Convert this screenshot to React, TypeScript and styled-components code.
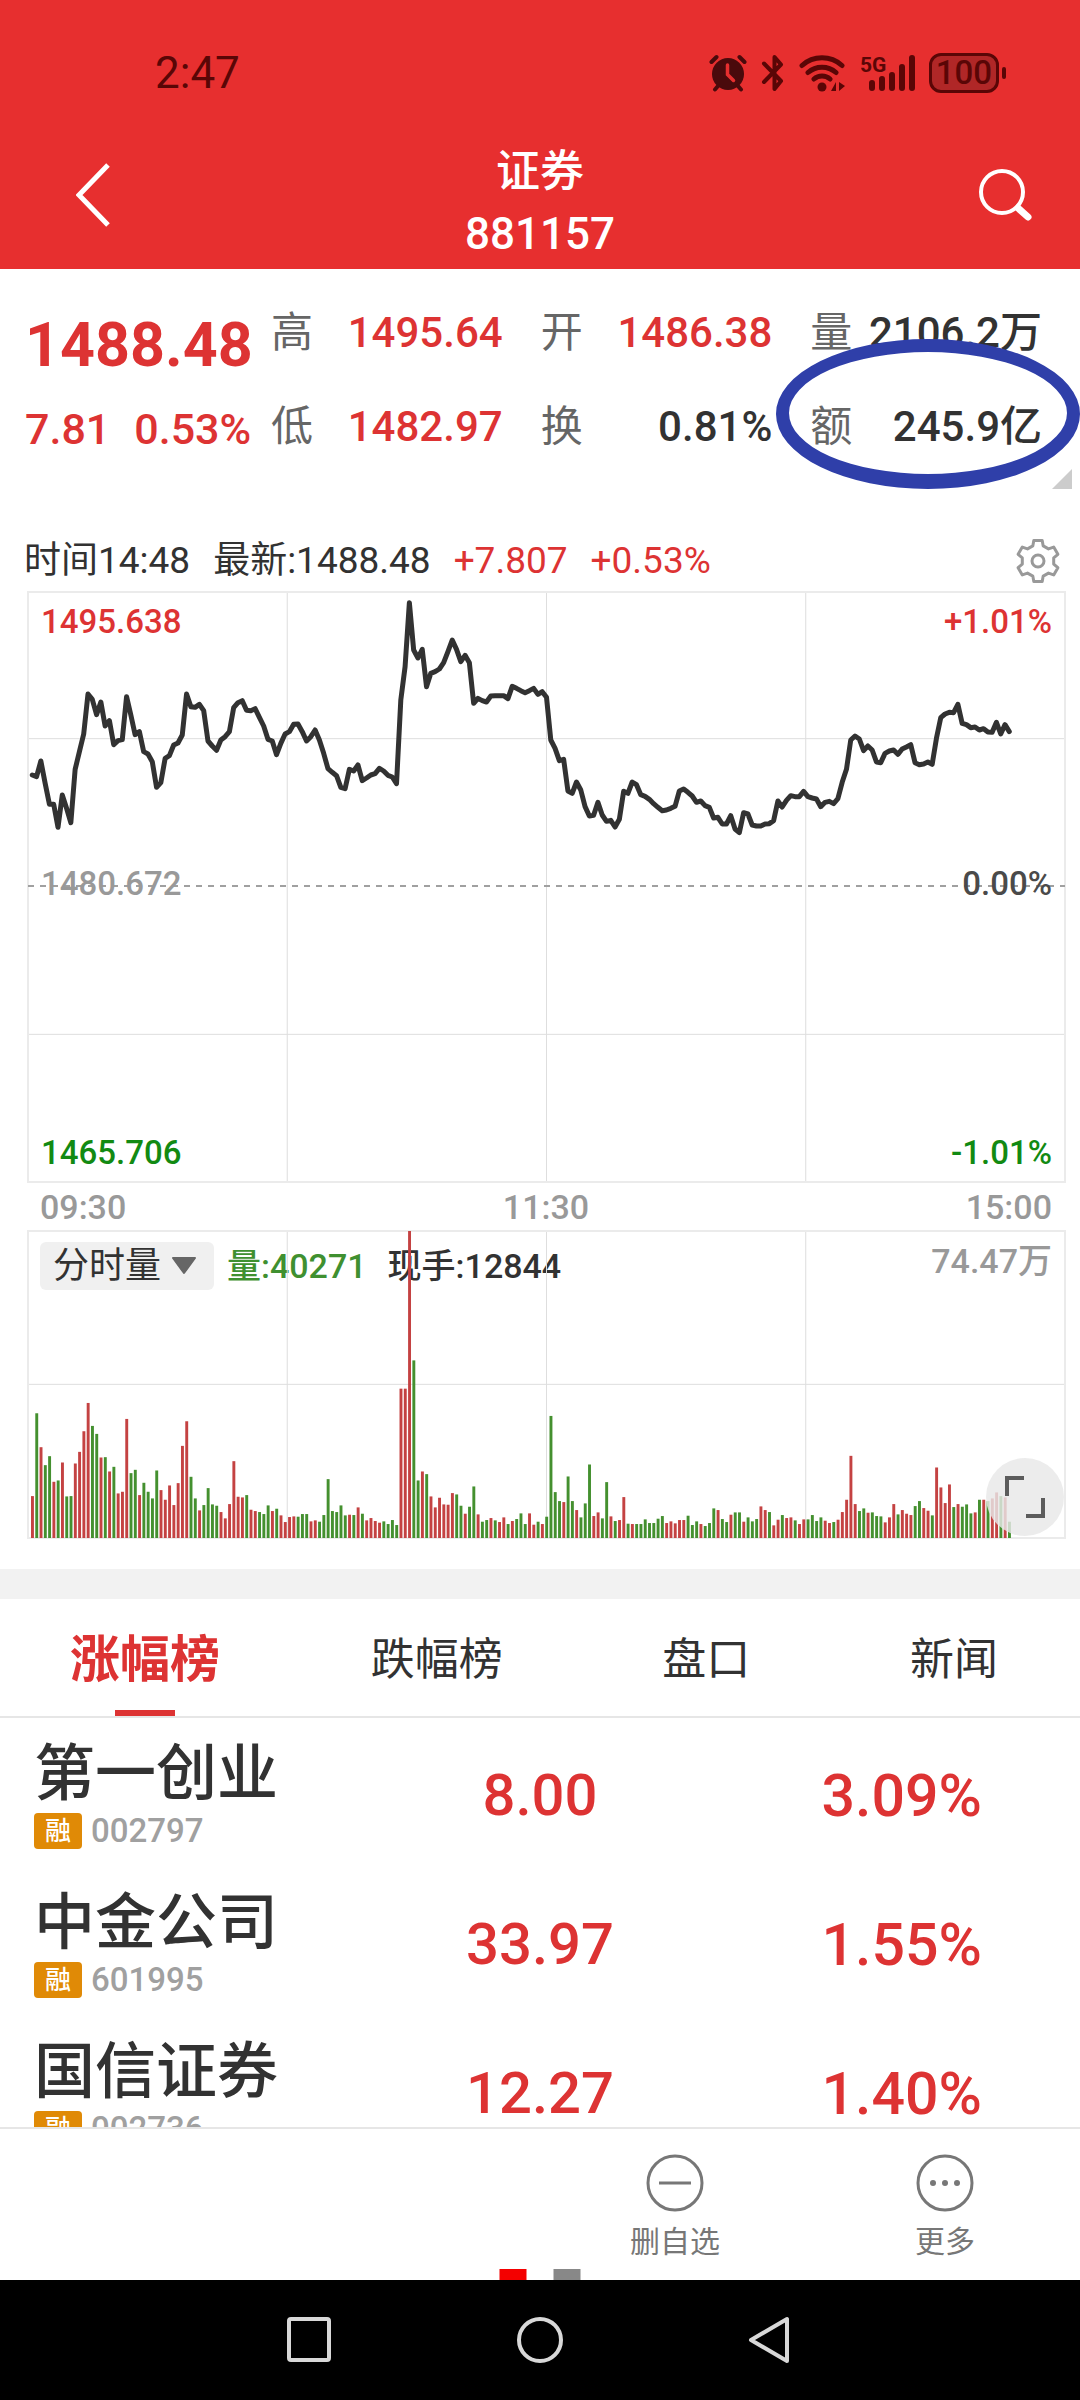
import React from "react";
import styled, { createGlobalStyle } from "styled-components";

const RED = "#dd3333";
const INK = "#323232";
const GRID = "#e6e6e6";

const GlobalStyle = createGlobalStyle`
  * { box-sizing: border-box; }
  body {
    margin: 0;
    background: #fff;
    color: ${INK};
    font-family: Roboto, "Noto Sans CJK SC", sans-serif;
  }
  button, select { font: inherit; color: inherit; border: 0; padding: 0; background: none; }
  svg { display: block; flex: none; }
`;

const Page = styled.main`
  display: flex;
  flex-direction: column;
  height: 100vh;
  overflow: hidden;
`;

/* ---------- header ---------- */

const Header = styled.header`
  flex: none;
  background: #e72f2f;
  color: #fff;
`;

const StatusBar = styled.div`
  display: flex;
  justify-content: space-between;
  align-items: center;
  height: 140px;
  padding: 6px 74px 0 155px;
  color: #5a0606;
`;

const Clock = styled.time`
  font-size: 44px;
  line-height: 52px;
`;

const StatusIcons = styled.div`
  display: flex;
  align-items: center;
  gap: 14px;
`;

const Battery = styled.div`
  display: flex;
  align-items: center;
  gap: 3px;
  &::after {
    content: "";
    width: 4px;
    height: 12px;
    border-radius: 2px;
    background: #5a0606;
  }
`;

const BatteryLevel = styled.span`
  width: 70px;
  height: 40px;
  border: 3px solid #5a0606;
  border-radius: 12px;
  background: #b02727;
  font-size: 33px;
  font-weight: 500;
  line-height: 34px;
  text-align: center;
`;

const TitleBar = styled.div`
  display: grid;
  grid-template-columns: 186px 1fr 186px;
  align-items: center;
  height: 129px;
  padding-bottom: 3px;
`;

const HeaderButton = styled.button<{ $end?: boolean }>`
  display: flex;
  justify-content: ${(p) => (p.$end ? "flex-end" : "center")};
  padding: 0 ${(p) => (p.$end ? 46 : 0)}px 16px 0;
`;

const Title = styled.h1`
  margin: 0;
  font-size: 44px;
  font-weight: 500;
  line-height: 62px;
  text-align: center;
`;

const Code = styled.span`
  display: block;
`;

/* ---------- quote ---------- */

const Quote = styled.section`
  position: relative;
  flex: none;
  display: grid;
  grid-template-columns: 246px 1fr;
  height: 256px;
  padding: 16px 38px 0 25px;
`;

const Last = styled.div`
  display: flex;
  flex-direction: column;
  gap: 18px;
  padding-top: 24px;
  color: ${RED};
`;

const LastPrice = styled.strong`
  font-size: 61px;
  font-weight: 700;
  line-height: 72px;
`;

const Change = styled.div`
  display: flex;
  gap: 24px;
  font-size: 43px;
  font-weight: 500;
  line-height: 60px;
`;

const Facts = styled.dl`
  display: grid;
  grid-template-columns: repeat(3, 1fr);
  grid-template-rows: repeat(2, 94px);
  column-gap: 38px;
  margin: 0;
  padding-top: 1px;
`;

const Fact = styled.div`
  display: flex;
  justify-content: space-between;
  align-items: center;
  font-size: 42px;
  line-height: 60px;
  white-space: nowrap;
`;

const FactLabel = styled.dt`
  color: #666;
`;

const FactValue = styled.dd<{ $up?: boolean }>`
  margin: 0;
  font-weight: 500;
  color: ${(p) => (p.$up ? RED : INK)};
`;

const Ring = styled.svg`
  position: absolute;
  top: 70px;
  right: 0;
`;

const Corner = styled.svg`
  position: absolute;
  right: 8px;
  bottom: 36px;
`;

/* ---------- charts ---------- */

const InfoLine = styled.div`
  flex: none;
  display: flex;
  align-items: center;
  gap: 23px;
  height: 67px;
  padding: 4px 17px 0 24px;
  font-size: 37px;
  line-height: 48px;
`;

const InfoText = styled.span<{ $up?: boolean }>`
  color: ${(p) => (p.$up ? RED : INK)};
`;

const SettingsButton = styled.button`
  margin-left: auto;
`;

const Plot = styled.section<{ $h: number }>`
  flex: none;
  display: grid;
  height: ${(p) => p.$h}px;
  margin: 0 15px 0 28px;
  > * { grid-area: 1 / 1; min-width: 0; min-height: 0; }
`;

const PlotSvg = styled.svg`
  width: 100%;
  height: 100%;
  overflow: visible;
`;

const Scale = styled.div`
  display: flex;
  flex-direction: column;
  justify-content: space-between;
  padding: 10px 13px 9px;
  font-size: 33px;
  font-weight: 500;
  line-height: 40px;
`;

const ScaleRow = styled.div<{ $tone: string; $right?: string; $lift?: boolean }>`
  display: flex;
  justify-content: space-between;
  padding-bottom: ${(p) => (p.$lift ? 8 : 0)}px;
  color: ${(p) => p.$tone};
  > :last-child { color: ${(p) => p.$right ?? p.$tone}; }
`;

const TimeAxis = styled.div`
  flex: none;
  display: flex;
  justify-content: space-between;
  align-items: center;
  height: 49px;
  padding: 0 28px 0 40px;
  color: #999;
  font-size: 34px;
  font-weight: 500;
`;

const VolumeHead = styled.div`
  display: flex;
  align-items: flex-start;
  padding: 11px 13px 0 12px;
  font-size: 36px;
  line-height: 48px;
`;

const PickerBox = styled.label`
  display: grid;
  align-items: center;
  width: 174px;
  height: 48px;
  border-radius: 6px;
  background: #f0f0f0;
  > * { grid-area: 1 / 1; }
  > svg { justify-self: end; margin-right: 17px; pointer-events: none; }
`;

const Picker = styled.select`
  appearance: none;
  width: 100%;
  height: 48px;
  padding-left: 13px;
  line-height: 48px;
`;

const VolumeText = styled.span<{ $tone: string; $gap: number }>`
  margin-left: ${(p) => p.$gap}px;
  color: ${(p) => p.$tone};
  font-size: 34px;
  font-weight: 500;
`;

const VolumeMax = styled.span`
  margin-left: auto;
  color: #999;
  font-size: 34px;
  font-weight: 500;
  line-height: 38px;
`;

const ExpandButton = styled.button`
  align-self: end;
  justify-self: end;
  display: grid;
  place-items: center;
  width: 78px;
  height: 78px;
  margin: 0 1px 2px 0;
  border-radius: 50%;
  background: rgba(232, 232, 232, 0.82);
`;

const Gap = styled.div`
  flex: none;
  height: 30px;
  margin-top: 31px;
  background: #f2f2f2;
`;

/* ---------- ranking ---------- */

const Tabs = styled.nav`
  flex: none;
  display: flex;
  justify-content: space-between;
  height: 119px;
  padding: 0 82px 0 79px;
  border-bottom: 2px solid ${GRID};
`;

/* Every tab keeps the width of its 44px label; the active label grows over it. */
const Tab = styled.button<{ $active?: boolean; $chars: number }>`
  display: grid;
  grid-template-columns: 100%;
  align-items: center;
  justify-items: center;
  width: ${(p) => p.$chars * 44}px;
  white-space: nowrap;
  color: ${(p) => (p.$active ? RED : INK)};
  font-size: ${(p) => (p.$active ? 50 : 44)}px;
  font-weight: ${(p) => (p.$active ? 700 : 400)};
  &::after {
    content: "";
    grid-area: 1 / 1;
    align-self: end;
    width: 60px;
    height: 6px;
    background: ${(p) => (p.$active ? RED : "transparent")};
  }
`;

const TabText = styled.span`
  grid-area: 1 / 1;
  padding-top: 4px;
  line-height: 60px;
`;

const ListArea = styled.div`
  flex: 1;
  min-height: 0;
  overflow: hidden;
`;

const Stocks = styled.table`
  width: 100%;
  table-layout: fixed;
  border-collapse: collapse;
`;

const StockRow = styled.tr`
  height: 149px;
`;

const NameCell = styled.th`
  padding: 17px 0 0 34px;
  text-align: left;
  font-weight: 400;
  vertical-align: top;
`;

const Name = styled.div`
  font-size: 61px;
  font-weight: 500;
  line-height: 78px;
`;

const Meta = styled.div`
  display: flex;
  align-items: center;
  gap: 9px;
  color: #a0a0a0;
  font-size: 33px;
  font-weight: 500;
  line-height: 36px;
`;

const Badge = styled.span`
  width: 48px;
  height: 36px;
  border-radius: 4px;
  background: #e08a06;
  color: #fff;
  font-size: 26px;
  line-height: 36px;
  text-align: center;
`;

const NumberCell = styled.td<{ $right?: boolean }>`
  padding: ${(p) => (p.$right ? "5px 98px 0 0" : "5px 0 0")};
  text-align: ${(p) => (p.$right ? "right" : "center")};
  color: ${RED};
  font-size: ${(p) => (p.$right ? 59 : 58)}px;
  font-weight: 500;
  white-space: nowrap;
`;

/* ---------- bottom ---------- */

const Actions = styled.footer`
  position: relative;
  flex: none;
  display: grid;
  grid-template-columns: repeat(4, 1fr);
  height: 153px;
  border-top: 2px solid ${GRID};
`;

const Action = styled.button<{ $column: number }>`
  grid-column: ${(p) => p.$column};
  display: flex;
  flex-direction: column;
  align-items: center;
  gap: 8px;
  padding-top: 25px;
  color: #777;
  font-size: 30px;
  line-height: 44px;
`;

const Pager = styled.div`
  position: absolute;
  bottom: 0;
  left: 50%;
  display: flex;
  gap: 27px;
  transform: translateX(-50%);
`;

const PagerDot = styled.span<{ $on?: boolean }>`
  width: 27px;
  height: 11px;
  background: ${(p) => (p.$on ? "#f40000" : "#888")};
`;

const SystemNav = styled.nav`
  flex: none;
  display: flex;
  justify-content: center;
  align-items: center;
  gap: 182px;
  height: 120px;
  background: #000;
`;

/* ---------- data ---------- */

/* One sample per minute, measured downwards; the price plot spans 36 to 1806. */
const PRICE = [
  585, 590, 543, 610, 673, 673, 742, 645, 685, 728, 568, 515, 462, 342, 358, 404, 366, 438, 422, 494,
  482, 479, 350, 405, 464, 455, 515, 522, 545, 622, 608, 535, 527, 495, 489, 465, 342, 380, 382, 373,
  392, 483, 498, 511, 480, 470, 455, 383, 368, 362, 391, 392, 386, 412, 438, 478, 483, 524, 490, 462,
  455, 433, 432, 455, 483, 470, 450, 480, 520, 566, 577, 587, 622, 626, 568, 573, 555, 602, 594, 585,
  581, 565, 573, 586, 591, 611, 360, 260, 68, 210, 234, 208, 320, 280, 275, 267, 248, 215, 180, 208,
  245, 226, 248, 370, 355, 362, 366, 348, 347, 347, 347, 356, 319, 325, 332, 338, 332, 325, 343, 335,
  352, 480, 505, 542, 538, 633, 640, 606, 630, 680, 708, 706, 667, 705, 724, 721, 741, 718, 634, 640,
  606, 614, 644, 649, 658, 671, 682, 692, 690, 685, 679, 633, 627, 637, 648, 667, 663, 677, 682, 714,
  712, 732, 732, 707, 747, 758, 698, 702, 735, 738, 738, 732, 731, 722, 663, 681, 661, 647, 650, 650,
  634, 650, 654, 657, 680, 667, 664, 671, 656, 607, 568, 480, 468, 477, 512, 498, 510, 546, 548, 520,
  513, 510, 523, 507, 501, 494, 548, 554, 552, 546, 553, 475, 413, 402, 397, 398, 373, 430, 434, 443,
  441, 450, 446, 456, 457, 427, 462, 434, 455,
];

/* Bar top (plot spans 241 to 1164) followed by r for a rising and g for a falling minute. */
const VOLUME = `
1038r 789g 891r 945g 918g 995r 991g 937r 1039g 1038g 940r 905r 843r 758r 827g 851g 922r 921g 964r 950g
1030r 1025r 806r 969g 959g 1035r 998g 1025g 1045g 961g 1020r 1049r 1006r 1065r 999r 887r 813r 980g 1045g 1081r
1065g 1014g 1063g 1067g 1086r 1105r 1062r 933r 1040r 1042r 1035g 1079r 1083r 1086g 1092g 1066g 1083r 1076g 1096r 1116r
1101r 1099r 1100g 1092g 1092g 1114r 1111r 1115g 1095g 987g 1083g 1086g 1066g 1096g 1094r 1095g 1072r 1091g 1111r 1104r
1113r 1118r 1114g 1122g 1110g 1125g 715r 715r 241r 630g 991g 964r 972g 1039r 1072r 1043r 1063r 1064r 1029r 1033g
1067g 1091r 1070g 1009g 1093r 1115g 1110g 1104r 1111g 1116r 1102r 1122g 1113r 1107g 1090g 1122g 1090r 1124r 1115g 1122r
1100g 797g 1026g 1053g 1056r 979g 1053g 1080r 1102g 1060g 943g 1098r 1087r 1105g 996g 1099r 1113g 1110r 1041r 1121g
1122r 1122g 1122g 1108g 1119g 1119g 1106g 1098g 1119r 1114r 1120r 1110r 1110r 1097g 1125g 1114g 1122r 1128g 1119g 1075g
1080r 1107g 1116g 1094r 1087g 1087g 1115r 1102g 1114g 1107g 1069r 1080r 1086g 1126r 1109r 1095g 1104r 1102r 1111g 1122r
1108r 1108g 1095g 1113g 1102g 1112r 1119r 1116g 1109r 1086r 1049r 917r 1062r 1083g 1075g 1088r 1087g 1098g 1099g 1117r
1102r 1062r 1093g 1080r 1091r 1095r 1068g 1053g 1074r 1082r 1096g 952r 1012r 1059r 1003r 1071g 1062r 1070g 1063g 1090g
1087r 1049g 1049r 1053g 1045r 1027r 1038g 1042r 1115g`
  .trim()
  .split(/\s+/)
  .map((item) => ({ top: parseInt(item, 10), up: item.endsWith("r") }));

const FACTS = [
  { label: "高", value: "1495.64", up: true },
  { label: "开", value: "1486.38", up: true },
  { label: "量", value: "2106.2万" },
  { label: "低", value: "1482.97", up: true },
  { label: "换", value: "0.81%" },
  { label: "额", value: "245.9亿" },
];

const TABS = ["涨幅榜", "跌幅榜", "盘口", "新闻"];

const STOCKS = [
  { name: "第一创业", code: "002797", price: "8.00", change: "3.09%" },
  { name: "中金公司", code: "601995", price: "33.97", change: "1.55%" },
  { name: "国信证券", code: "002736", price: "12.27", change: "1.40%" },
];

/* ---------- drawings ---------- */

const AlarmIcon = () => (
  <svg width="38" height="38" viewBox="0 0 38 38" fill="none" stroke="#4a0a0c" strokeWidth="4" strokeLinecap="round">
    <circle cx="19" cy="20" r="16" fill="#4a0a0c" stroke="none" />
    <path d="M2.500 8 7.500 3M35.500 8 30.500 3M9 32 6 35.500M29 32l3 3.500" />
    <path d="M18.500 11v9.500l6 6" stroke="#e72f2f" strokeWidth="3.500" />
  </svg>
);

const BluetoothIcon = () => (
  <svg width="24" height="38" viewBox="0 0 24 38" fill="none" stroke="#5a0606" strokeWidth="4" strokeLinejoin="round" strokeLinecap="round">
    <path d="M3 9.500 20 27l-6.500 8V3L20 10.500 3 28" />
  </svg>
);

const WifiIcon = () => (
  <svg width="48" height="38" viewBox="0 0 48 38" fill="none" stroke="#5a0606" strokeWidth="5" strokeLinecap="round">
    <path d="M3 11.500a30 30 0 0 1 40 0M9 18.500a21 21 0 0 1 28 0M15 25a12 12 0 0 1 16 0" />
    <circle cx="23" cy="33" r="4.500" fill="#5a0606" stroke="none" />
    <path d="M37 28v9h-5zM40 37v-9l6 4z" fill="#5a0606" stroke="none" />
  </svg>
);

const SignalIcon = () => (
  <svg width="54" height="38" viewBox="0 0 54 38" fill="none" stroke="#5a0606" strokeWidth="6" strokeLinecap="round">
    <text x="-1" y="18" fill="#5a0606" stroke="none" fontSize="21" fontWeight="700">5G</text>
    <path d="M11 29v5M21 25v9M31 21v13M41 13v21M51 4v30" />
  </svg>
);

const gearPath = (() => {
  const points: string[] = [];
  for (let k = 0; k < 6; k++) {
    const base = (k * Math.PI) / 3 - Math.PI / 2;
    [[-0.33, 16], [-0.2, 21], [0.2, 21], [0.33, 16]].forEach(([turn, r]) => {
      points.push(`${(25 + r * Math.cos(base + turn)).toFixed(1)} ${(25 + r * Math.sin(base + turn)).toFixed(1)}`);
    });
  }
  return `M${points.join("L")}Z`;
})();

const GearIcon = () => (
  <svg width="50" height="50" viewBox="0 0 50 50" fill="none" stroke="#999" strokeWidth="3" strokeLinejoin="round">
    <path d={gearPath} />
    <circle cx="25" cy="25" r="6" />
  </svg>
);

const GridLines = ({ top, bottom, rows }: { top: number; bottom: number; rows: number[] }) => (
  <g fill="none">
    <path
      stroke="#dedede"
      strokeWidth="1"
      vectorEffect="non-scaling-stroke"
      d={
        [60.5, 121, 181.5].map((x) => `M${x} ${top}V${bottom}`).join("") +
        rows.map((y) => `M0 ${y}H242`).join("")
      }
    />
    <path stroke="#ebebeb" strokeWidth="2" vectorEffect="non-scaling-stroke" d={`M0 ${top}H242V${bottom}H0Z`} />
  </g>
);

const PricePlot = () => (
  <PlotSvg viewBox="0 36 242 1770" preserveAspectRatio="none" role="img" aria-label="分时走势">
    <GridLines top={36} bottom={1806} rows={[476, 1363]} />
    <path d="M0 918H242" stroke="#a0a0a0" strokeWidth="2" strokeDasharray="6 6" vectorEffect="non-scaling-stroke" />
    <polyline
      points={PRICE.map((y, i) => `${i + 1},${y}`).join(" ")}
      fill="none"
      stroke={INK}
      strokeWidth="5"
      strokeLinejoin="round"
      strokeLinecap="round"
      vectorEffect="non-scaling-stroke"
    />
  </PlotSvg>
);

const VolumePlot = () => (
  <PlotSvg viewBox="0 241 242 923" preserveAspectRatio="none" role="img" aria-label="分时量">
    <GridLines top={241} bottom={1164} rows={[702]} />
    {VOLUME.map((bar, i) => (
      <rect key={i} x={i + 0.7} y={bar.top} width="0.68" height={1164 - bar.top} fill={bar.up ? "#c44242" : "#44902f"} />
    ))}
  </PlotSvg>
);

export default function App() {
  return (
    <Page>
      <GlobalStyle />
      <Header>
        <StatusBar>
          <Clock>2:47</Clock>
          <StatusIcons>
            <AlarmIcon />
            <BluetoothIcon />
            <WifiIcon />
            <SignalIcon />
            <Battery>
              <BatteryLevel>100</BatteryLevel>
            </Battery>
          </StatusIcons>
        </StatusBar>
        <TitleBar>
          <HeaderButton aria-label="返回">
            <svg width="34" height="64" viewBox="0 0 34 64" fill="none" stroke="#fff" strokeWidth="5">
              <path d="M32 2 3 32l29 30" />
            </svg>
          </HeaderButton>
          <Title>
            证券<Code>881157</Code>
          </Title>
          <HeaderButton $end aria-label="搜索">
            <svg width="56" height="56" viewBox="0 0 56 56" fill="none" stroke="#fff" strokeLinecap="round">
              <circle cx="24" cy="25" r="21" strokeWidth="4" />
              <path d="m40 41 10 9" strokeWidth="7" />
            </svg>
          </HeaderButton>
        </TitleBar>
      </Header>

      <Quote>
        <Last>
          <LastPrice>1488.48</LastPrice>
          <Change>
            <span>7.81</span>
            <span>0.53%</span>
          </Change>
        </Last>
        <Facts>
          {FACTS.map((f) => (
            <Fact key={f.label}>
              <FactLabel>{f.label}</FactLabel>
              <FactValue $up={f.up}>{f.value}</FactValue>
            </Fact>
          ))}
        </Facts>
        <Ring width="304" height="150" viewBox="0 0 304 150">
          <path
            fill="#2f3fa9"
            fillRule="evenodd"
            d="M0 75a152 75 0 0 1 304 0a152 75 0 0 1-304 0ZM13 74a139 61 0 0 0 278 0a139 61 0 0 0-278 0Z"
          />
        </Ring>
        <Corner width="20" height="20" viewBox="0 0 20 20">
          <path d="M20 0V20H0Z" fill="#ccc" />
        </Corner>
      </Quote>

      <InfoLine>
        <InfoText>时间14:48</InfoText>
        <InfoText>最新:1488.48</InfoText>
        <InfoText $up>+7.807</InfoText>
        <InfoText $up>+0.53%</InfoText>
        <SettingsButton aria-label="设置">
          <GearIcon />
        </SettingsButton>
      </InfoLine>

      <Plot $h={590}>
        <PricePlot />
        <Scale>
          <ScaleRow $tone={RED}>
            <span>1495.638</span>
            <span>+1.01%</span>
          </ScaleRow>
          <ScaleRow $tone="#999" $right="#4a4a4a" $lift>
            <span>1480.672</span>
            <span>0.00%</span>
          </ScaleRow>
          <ScaleRow $tone="#128a12">
            <span>1465.706</span>
            <span>-1.01%</span>
          </ScaleRow>
        </Scale>
      </Plot>
      <TimeAxis>
        <span>09:30</span>
        <span>11:30</span>
        <span>15:00</span>
      </TimeAxis>
      <Plot $h={307}>
        <VolumeHead>
          <PickerBox>
            <Picker aria-label="指标">
              <option>分时量</option>
            </Picker>
            <svg width="26" height="18" viewBox="0 0 26 18">
              <path d="M2 1H24L13 16Z" fill="#666" stroke="#666" strokeWidth="2" strokeLinejoin="round" />
            </svg>
          </PickerBox>
          <VolumeText $tone="#3f9030" $gap={13}>量:40271</VolumeText>
          <VolumeText $tone={INK} $gap={21}>现手:12844</VolumeText>
          <VolumeMax>74.47万</VolumeMax>
        </VolumeHead>
        <VolumePlot />
        <ExpandButton aria-label="全屏">
          <svg width="40" height="42" viewBox="0 0 40 42" fill="none" stroke="#5c5c5c" strokeWidth="4">
            <path d="M2 20V2H19M38 22V40H21" />
          </svg>
        </ExpandButton>
      </Plot>

      <Gap />
      <Tabs>
        {TABS.map((text, i) => (
          <Tab key={text} $active={i === 0} $chars={text.length}>
            <TabText>{text}</TabText>
          </Tab>
        ))}
      </Tabs>
      <ListArea>
        <Stocks>
          <tbody>
            {STOCKS.map((s) => (
              <StockRow key={s.code}>
                <NameCell scope="row">
                  <Name>{s.name}</Name>
                  <Meta>
                    <Badge>融</Badge>
                    {s.code}
                  </Meta>
                </NameCell>
                <NumberCell>{s.price}</NumberCell>
                <NumberCell $right>{s.change}</NumberCell>
              </StockRow>
            ))}
          </tbody>
        </Stocks>
      </ListArea>

      <Actions>
        <Action $column={3}>
          <svg width="58" height="58" viewBox="0 0 58 58" fill="none" stroke="#777" strokeWidth="3">
            <circle cx="29" cy="29" r="27" />
            <path d="M13 29H45" />
          </svg>
          删自选
        </Action>
        <Action $column={4}>
          <svg width="58" height="58" viewBox="0 0 58 58" fill="none" stroke="#777" strokeWidth="3">
            <circle cx="29" cy="29" r="27" />
            <g fill="#777" stroke="none">
              <circle cx="17" cy="29" r="3" />
              <circle cx="29" cy="29" r="3" />
              <circle cx="41" cy="29" r="3" />
            </g>
          </svg>
          更多
        </Action>
        <Pager>
          <PagerDot $on />
          <PagerDot />
        </Pager>
      </Actions>

      <SystemNav>
        <button aria-label="最近任务">
          <svg width="48" height="48" viewBox="0 0 48 48" fill="none" stroke="#d8d8d8" strokeWidth="4">
            <rect x="3" y="3" width="40" height="41" rx="2" />
          </svg>
        </button>
        <button aria-label="主屏幕">
          <svg width="48" height="48" viewBox="0 0 48 48" fill="none" stroke="#d8d8d8" strokeWidth="4">
            <circle cx="24" cy="24" r="21" />
          </svg>
        </button>
        <button aria-label="后退">
          <svg width="48" height="48" viewBox="0 0 48 48" fill="none" stroke="#d8d8d8" strokeWidth="4" strokeLinejoin="round">
            <path d="M41 3V45L5 24Z" />
          </svg>
        </button>
      </SystemNav>
    </Page>
  );
}
